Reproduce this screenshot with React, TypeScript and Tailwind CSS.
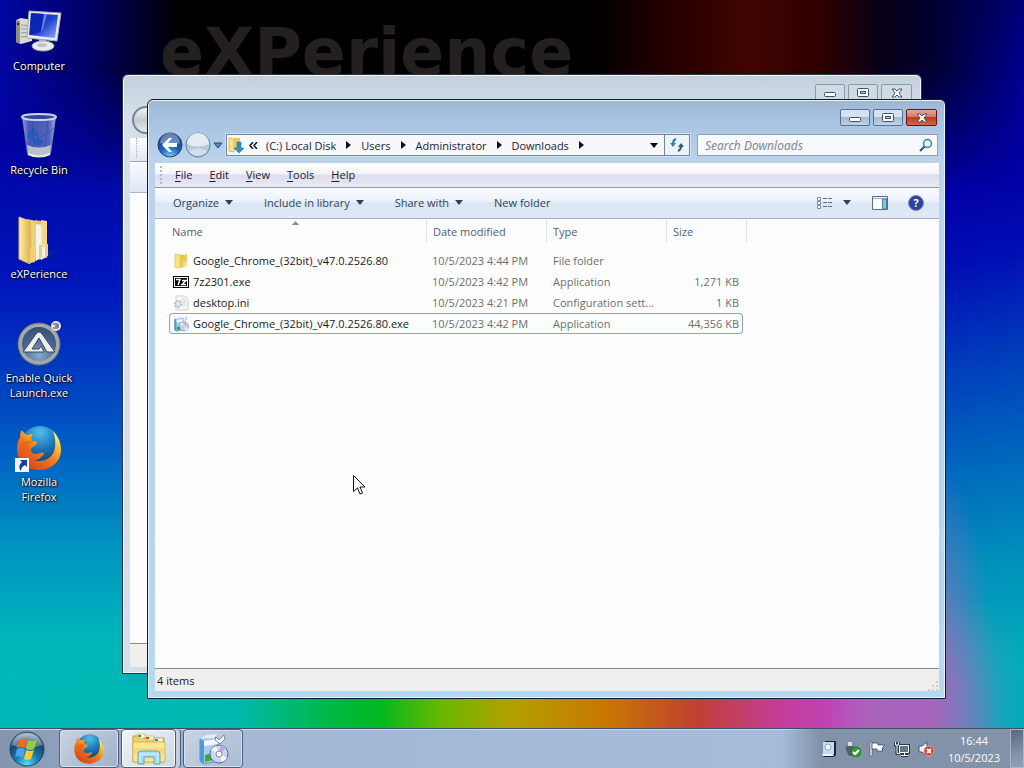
import React from 'react';

interface FileRow {
  name: string;
  modified: string;
  type: string;
  size: string;
  icon: React.ReactNode;
  selected?: boolean;
}

const Caret = () => (
  <svg width="8" height="5" viewBox="0 0 8 5" aria-hidden="true">
    <path d="M0 0h8L4 5z" fill="currentColor" />
  </svg>
);

const ComputerIcon = () => (
  <svg width="48" height="48" viewBox="0 0 48 48" aria-hidden="true">
    <defs>
      <linearGradient id="screen" x1="0" y1="0" x2="1" y2="1">
        <stop offset="0" stopColor="#1430c8" />
        <stop offset="0.5" stopColor="#1b3fd0" />
        <stop offset="1" stopColor="#8fb0f4" />
      </linearGradient>
    </defs>
    <path d="M1 12l5-2 11 2v21l-11 3-5-2z" fill="#d9d9d3" />
    <path d="M1 12l4 1v23l-4-2z" fill="#8f8f88" />
    <path d="M6 17l10 1M6 21l10 0M6 25l10-1M6 29l10-1" stroke="#9a9a92" />
    <rect x="2" y="15" width="2" height="2" fill="#222" />
    <path d="M24 31l7 1 1 7h-8z" fill="#b9bfc4" />
    <ellipse cx="28" cy="38" rx="11" ry="5" fill="#e8ebe6" stroke="#a8ada8" />
    <ellipse cx="27" cy="37" rx="5" ry="2" fill="#bcc3c5" />
    <path d="M14 3l32 2-4 28-30-3z" fill="#e8eaec" stroke="#a5abb2" />
    <path d="M16 5l27 2-3 23-26-3z" fill="url(#screen)" />
    <path d="M16 5l13 1-3 18-11 3z" fill="#0a1fae" opacity="0.8" />
    <path d="M29 6l3 0-4 15-2 3z" fill="#7f9cf0" opacity="0.7" />
  </svg>
);

const BinIcon = () => (
  <svg width="48" height="48" viewBox="0 0 48 48" aria-hidden="true">
    <defs>
      <linearGradient id="bin" x1="0" x2="1" y1="0" y2="0">
        <stop offset="0" stopColor="#9fb3e6" />
        <stop offset="0.2" stopColor="#4a61b8" />
        <stop offset="0.8" stopColor="#5a6fc0" />
        <stop offset="1" stopColor="#b5c2ea" />
      </linearGradient>
    </defs>
    <path d="M7 4h34l-5 38q-12 6-24 0z" fill="url(#bin)" opacity="0.9" />
    <path d="M12 33q12 5 24 0l-1 9q-11 5-22 0z" fill="#cdd1cb" opacity="0.85" />
    <path d="M13 42q11 5 22 0" fill="none" stroke="#e6ebee" strokeWidth="2" />
    <path d="M14 20l5-4 4 4 1 5-4-1-4 3-4-2zM18 27l6-2 4 5-5 4-5-3z" fill="#245bc0" />
    <path d="M26 25l13-9M17 8l2 26M33 8l-3 26" stroke="#2b3f9a" opacity="0.5" />
    <ellipse cx="24" cy="5" rx="17" ry="3" fill="#31479f" stroke="#cbd6ee" strokeWidth="2" />
  </svg>
);

const FolderIcon = () => (
  <svg width="48" height="48" viewBox="0 0 48 48" aria-hidden="true">
    <defs>
      <linearGradient id="fold" x1="0" x2="1">
        <stop offset="0" stopColor="#fff0a8" />
        <stop offset="1" stopColor="#dcb04a" />
      </linearGradient>
    </defs>
    <path d="M28 33l14 2-9 8z" fill="#152a70" opacity="0.5" />
    <path d="M20 4l12 2v36l-10-2z" fill="#e3bf62" />
    <path d="M21 8l6 1v35l-6-3z" fill="#f4f4ef" />
    <path d="M26 4l6 1v29l-5 10z" fill="#f3d985" />
    <path d="M12 3l9 2v40l-7-4z" fill="#efd078" />
    <path d="M4 1l11 4 1 30-1 13-11-5z" fill="url(#fold)" stroke="#d8b75e" />
    <path d="M15 32l5-2v16l-5 1zM24 29h3v12l-3 3zM30 28h3v12l-4 2z" fill="#f3cf6e" />
    <path d="M27 31l3-1v12l-3 1zM21 30l3-1v14l-3 2z" fill="#eef2f6" />
  </svg>
);

const AutoItIcon = () => (
  <svg width="48" height="48" viewBox="0 0 48 48" aria-hidden="true">
    <defs>
      <radialGradient id="auto" cx="0.5" cy="0.8" r="0.8">
        <stop offset="0" stopColor="#86a9cc" />
        <stop offset="0.6" stopColor="#46658c" />
        <stop offset="1" stopColor="#2f4a70" />
      </radialGradient>
    </defs>
    <circle cx="24" cy="24" r="19" fill="url(#auto)" stroke="#a5a7a8" strokeWidth="4" />
    <circle cx="24" cy="24" r="21" fill="none" stroke="#6e7072" />
    <path d="M8 32L21 14q3-4 6 0l13 18h-8L24 18l-7 11h7l2-3 3 6z" fill="#eceeee" stroke="#3a4755" />
    <circle cx="41" cy="6" r="5" fill="#e5e6e6" />
    <path d="M38 4h5v4h-5M40 6h3" fill="none" stroke="#4a4040" />
  </svg>
);

const FirefoxIcon = ({ size }: { size: number }) => (
  <svg width={size} height={size} viewBox="0 0 48 48" aria-hidden="true">
    <defs>
      <radialGradient id="globe" cx="0.5" cy="0.15" r="0.9">
        <stop offset="0" stopColor="#4fc0ea" />
        <stop offset="0.5" stopColor="#1a72b4" />
        <stop offset="1" stopColor="#122f66" />
      </radialGradient>
      <linearGradient id="fox" x1="0.9" y1="0.1" x2="0.3" y2="0.9">
        <stop offset="0" stopColor="#fff3a0" />
        <stop offset="0.25" stopColor="#f9c038" />
        <stop offset="0.6" stopColor="#ef7a1c" />
        <stop offset="1" stopColor="#dc4a1c" />
      </linearGradient>
    </defs>
    <circle cx="25" cy="22" r="20" fill="url(#globe)" />
    <path
      d="M38 7q8 8 8 19c0 12-10 20-22 20C11 46 2 37 2 25c0-5 1-9 3-11 0-3 0-5 2-8 2 3 3 4 5 5 3-1 5-1 6-1-2 3-2 4-1 7 3 0 5 0 5 2-1 3-5 4-6 6-1 4 3 5 6 5 4-1 7-2 7 0-3 4-6 6-10 6 8 3 20-1 21-13 1-8-1-13-2-16z"
      fill="url(#fox)"
    />
    <path d="M6 20c4-4 8-4 12-2-4 1-5 4-4 7 1 7 8 9 12 9-9 6-22 0-20-14z" fill="#e65c1a" opacity="0.6" />
  </svg>
);

const DownloadsIcon = () => (
  <svg width="18" height="18" viewBox="0 0 18 18" aria-hidden="true">
    <path d="M2 2l5 1v13l-5-1z" fill="#f8e48c" stroke="#e0b94c" />
    <path d="M7 2h6v12H7z" fill="#e9c75e" />
    <path d="M10 6h4v6h3l-5 5-5-5h3z" fill="#2f8ed0" stroke="#1a65a5" strokeWidth="0.5" />
  </svg>
);

const SmallFolderIcon = () => (
  <svg className="shrink-0" width="16" height="16" viewBox="0 0 16 16" aria-hidden="true">
    <path d="M2 1l5 1v13l-5-1z" fill="#f6e48a" stroke="#e3cb66" />
    <path d="M7 2l3-1v13l-3 1zM10 2l4-1v11l-4 2z" fill="#e6cb5c" />
    <path d="M10 9l4-1v5l-4 2z" fill="#f4df80" />
  </svg>
);

const SevenZipIcon = () => (
  <svg className="shrink-0" width="16" height="16" viewBox="0 0 16 16" aria-hidden="true">
    <rect y="2" width="16" height="12" fill="#000" />
    <rect x="1.500" y="3.500" width="13" height="9" fill="none" stroke="#fff" />
    <path d="M3 5.500h4L5 11M9 6.500h4l-4 4h4" fill="none" stroke="#fff" strokeWidth="1.500" />
  </svg>
);

const IniIcon = () => (
  <svg className="shrink-0" width="16" height="16" viewBox="0 0 16 16" aria-hidden="true">
    <path d="M3 1h9l3 3v11H3z" fill="#f6f8f8" stroke="#cdd3d5" />
    <path d="M8 4h4M9 6h4M9 8h4M9 10h4" stroke="#ccd4d8" />
    <circle cx="5" cy="9" r="3" fill="#e4e9ea" stroke="#b4bcc0" strokeWidth="2" strokeDasharray="2 1" />
  </svg>
);

const InstallerIcon = ({ size }: { size: number }) => (
  <svg className="shrink-0" width={size} height={size} viewBox="0 0 32 32" aria-hidden="true">
    <path d="M3 6l14-2 4 2v22l-14 3-4-3z" fill="#a9cdea" stroke="#5d93c0" />
    <path d="M3 6l4 2v23l-4-3z" fill="#4c9bd4" />
    <path d="M7 8l14-2v5L7 13z" fill="#f3f9fd" />
    <path d="M8 22l8-2v7l-8 2z" fill="#3cab2c" />
    <path d="M3 6l6-4 11-1-3 4z" fill="#e1eef8" />
    <circle cx="22" cy="21" r="9" fill="#cfd3ee" stroke="#5a689e" />
    <path d="M22 21l-8-4a9 9 0 0 1 5-4zM22 21l8 4a9 9 0 0 1-5 4z" fill="#f4f4ff" />
    <path d="M22 21l2-9a9 9 0 0 1 5 3z" fill="#b6a7e2" />
    <circle cx="22" cy="21" r="3" fill="#fff" stroke="#7d88bd" />
    <path d="M19 4l3 3 5-5 1 4-5 5-5-4z" fill="#eef4f8" stroke="#5a6a7c" strokeWidth="0.7" />
  </svg>
);

const ExplorerIcon = () => (
  <svg width="36" height="32" viewBox="0 0 36 32" aria-hidden="true">
    <path d="M2 3h10l2 3h5l2-1h12v24H2z" fill="#f1cf6c" stroke="#c79b3c" />
    <path d="M6 1h8v4H6zM15 3h8v4h-8zM23 5h9v4h-9z" fill="#fbf5dc" stroke="#c7a95a" strokeWidth="0.6" />
    <rect x="7" y="2" width="3" height="2" fill="#3aa546" />
    <rect x="15" y="4" width="3" height="2" fill="#d8442e" />
    <rect x="24" y="6" width="3" height="2" fill="#3a7fd0" />
    <path d="M2 9h32v20H2z" fill="#fae795" stroke="#d9b250" />
    <path d="M3 15h30v6H3z" fill="#f6d977" />
    <path d="M7 31V21q0-3 3-3h16q3 0 3 3v10h-6v-7H13v7z" fill="#a8dcee" stroke="#5ba4c4" />
    <path d="M9 29v-8h18v8" fill="none" stroke="#def4fb" />
  </svg>
);

const StartOrb = () => (
  <svg width="38" height="38" viewBox="0 0 38 38" aria-hidden="true">
    <defs>
      <radialGradient id="orb" cx="0.5" cy="0.95" r="0.9">
        <stop offset="0" stopColor="#4fe0f4" />
        <stop offset="0.4" stopColor="#1679ae" />
        <stop offset="0.75" stopColor="#1c466e" />
        <stop offset="1" stopColor="#8fa9c0" />
      </radialGradient>
    </defs>
    <circle cx="19" cy="19" r="17" fill="url(#orb)" stroke="#27405c" />
    <path d="M4 15a15.500 15.500 0 0 1 30 0q-15 6-30 0z" fill="#fff" opacity="0.3" />
    <path d="M11 10q4-3 8-1l-2 9q-4-2-8 0z" fill="#ef6a2a" />
    <path d="M20 10q4 2 9 0l-3 9q-4 2-8 0z" fill="#9ccb3c" />
    <path d="M9 19q4-2 8 0l-2 9q-4-3-8-1z" fill="#48a4e4" />
    <path d="M18 20q4 2 8 0l-3 9q-4 2-7 0z" fill="#fccb30" />
  </svg>
);

const MinGlyph = () => (
  <svg width="12" height="12" viewBox="0 0 12 12" aria-hidden="true">
    <rect x="0.500" y="5.500" width="11" height="4" rx="1" fill="#fff" stroke="#3f4f63" />
  </svg>
);

const MaxGlyph = () => (
  <svg width="12" height="12" viewBox="0 0 12 12" aria-hidden="true">
    <rect x="0.500" y="1.500" width="11" height="8" rx="1" fill="#fff" stroke="#3f4f63" />
    <rect x="3.500" y="4.500" width="5" height="2" fill="#b9cbdf" stroke="#3f4f63" />
  </svg>
);

const CloseGlyph = () => (
  <svg width="12" height="12" viewBox="0 0 12 12" aria-hidden="true">
    <path d="M1 2h3l2 2 2-2h3L8 6l3 4H8L6 8l-2 2H1l3-4z" fill="#fff" stroke="#44505f" />
  </svg>
);

const desktopItems = [
  { label: 'Computer', icon: <ComputerIcon /> },
  { label: 'Recycle Bin', icon: <BinIcon /> },
  { label: 'eXPerience', icon: <FolderIcon /> },
  { label: 'Enable Quick Launch.exe', icon: <AutoItIcon /> },
  {
    label: 'Mozilla Firefox',
    icon: (
      <>
        <FirefoxIcon size={48} />
        <svg className="absolute bottom-0 left-0" width="14" height="14" viewBox="0 0 14 14" aria-hidden="true">
          <rect width="14" height="14" fill="#f4f6fa" />
          <path d="M5 2h7v7l-2-2q-4 2-4 6-4-5 1-9z" fill="#1c3f8c" />
        </svg>
      </>
    ),
  },
];

const files: FileRow[] = [
  { name: 'Google_Chrome_(32bit)_v47.0.2526.80', modified: '10/5/2023 4:44 PM', type: 'File folder', size: '', icon: <SmallFolderIcon /> },
  { name: '7z2301.exe', modified: '10/5/2023 4:42 PM', type: 'Application', size: '1,271 KB', icon: <SevenZipIcon /> },
  { name: 'desktop.ini', modified: '10/5/2023 4:21 PM', type: 'Configuration sett...', size: '1 KB', icon: <IniIcon /> },
  { name: 'Google_Chrome_(32bit)_v47.0.2526.80.exe', modified: '10/5/2023 4:42 PM', type: 'Application', size: '44,356 KB', icon: <InstallerIcon size={16} />, selected: true },
];

const crumbs = ['(C:) Local Disk', 'Users', 'Administrator', 'Downloads'];
const menus = ['File', 'Edit', 'View', 'Tools', 'Help'];

const Wallpaper = () => (
  <div className="absolute inset-0 overflow-hidden bg-[linear-gradient(168deg,#000044_0%,#000060_16%,#000090_30%,#0000a8_42%,#0010b4_50%,#0040bc_61%,#0064bc_70%,#0090bc_82%,#00b4b8_96%)]">
    <div className="absolute inset-y-0 left-0 w-32 bg-[linear-gradient(to_bottom,#0008a0_0%,#0004a4_20%,#0018bc_40%,#0058c4_60%,#0094c0_75%,#00b4bc_88%)]" />
    <div className="absolute inset-x-0 top-0 h-48 bg-[linear-gradient(to_right,transparent_0%,#00006c_8%,#000028_14%,#000_18%,#000_58%,#200000_64%,#400400_73%,#300000_80%,#080018_86%,#000030_91%,transparent_100%)] [mask-image:linear-gradient(to_bottom,#000_35%,transparent)]" />
    <div className="absolute inset-x-0 bottom-0 h-32 bg-[linear-gradient(to_right,#00b8b8_0%,#00b8b0_23%,#00b848_32%,#00b820_37%,#68b800_43%,#b4a000_50%,#c87800_59%,#c04030_68%,#c43c98_76%,#c044b8_82%,#b070bc_88%,#5090bc_93%,#00acb8_100%)] [mask-image:linear-gradient(to_bottom,transparent,#000_70%)]" />
    <div className="absolute right-0 bottom-0 h-80 w-48 bg-[radial-gradient(ellipse_90px_300px_at_40%_100%,#a864bc_20%,transparent)]" />
    <p className="absolute top-5 left-[160px] font-['DejaVu_Sans'] text-[65px] leading-none font-bold text-[#252020]">eXPerience</p>
  </div>
);

const CaptionButtons = ({ active }: { active?: boolean }) => {
  const idle = active
    ? 'border-[#56708f] bg-[linear-gradient(#d5e2f0_45%,#a3bad3_50%,#bdd3ea)]'
    : 'border-[#8b98a8] bg-[#cfdae6]';
  return (
    <div className="flex gap-[3px]">
      <button aria-label="Minimize" className={`flex h-[17px] w-[30px] items-center justify-center rounded-xs border ${idle}`}>
        <MinGlyph />
      </button>
      <button aria-label="Maximize" className={`flex h-[17px] w-[30px] items-center justify-center rounded-xs border ${idle}`}>
        <MaxGlyph />
      </button>
      <button
        aria-label="Close"
        className={`flex h-[17px] w-[31px] items-center justify-center rounded-xs border ${
          active ? 'border-[#5c1710] bg-[linear-gradient(#e8a797_0%,#d7796a_45%,#be3a22_50%,#d8664a)]' : idle
        }`}
      >
        <CloseGlyph />
      </button>
    </div>
  );
};

const BackWindow = () => (
  <section aria-label="Background window" className="absolute top-[74px] right-[102px] bottom-[54px] left-[122px] flex flex-col rounded-t-md border border-[#2c3340] bg-[linear-gradient(#c3cfdb,#d3dfea_40px)] pr-1.5 pb-1.5 pl-[7px] shadow-[inset_0_0_0_1px_#f2f6fa]">
    <div className="flex h-[31px] justify-end pt-[9px] pr-[3px]">
      <CaptionButtons />
    </div>
    <div className="flex h-8 items-start pl-0.5">
      <div className="size-7 rounded-full border-2 border-[#7d858e] bg-[linear-gradient(#eef2f5,#c3cdd6_50%,#e2e9ee)]" />
    </div>
    <div className="h-6 border-b border-[#9aa6b4] bg-[linear-gradient(#fff,#e2e4f0)]">
      <div className="ml-1.5 h-5 w-px border-l border-dotted border-[#9fa8b4]" />
    </div>
    <div className="h-[31px] border-b border-[#a9b8ca] bg-[linear-gradient(#f8fbff,#dde7f3)]" />
    <div className="flex-1 bg-[#fdfdfd]" />
    <div className="h-6 border-t border-[#8b8b8b] bg-[#f1eeee]" />
  </section>
);

const AddressRow = () => (
  <div className="flex h-8 items-start pr-px">
    <div className="flex items-center pl-px">
      <button aria-label="Back">
        <svg width="28" height="28" viewBox="0 0 28 28" aria-hidden="true">
          <defs>
            <radialGradient id="back" cx="0.5" cy="1" r="0.9">
              <stop offset="0" stopColor="#6fd0f8" />
              <stop offset="0.5" stopColor="#1c62b8" />
              <stop offset="1" stopColor="#16408c" />
            </radialGradient>
          </defs>
          <circle cx="14" cy="14" r="12" fill="url(#back)" stroke="#2a4468" />
          <path d="M4 12a10 10 0 0 1 20 0q-10 4-20 0z" fill="#fff" opacity="0.35" />
          <path d="M6 14l7-7h3l-4 5h9v4h-9l4 5h-3z" fill="#fff" />
        </svg>
      </button>
      <button aria-label="Forward">
        <svg width="28" height="28" viewBox="0 0 28 28" aria-hidden="true">
          <circle cx="14" cy="14" r="12" fill="#b7c9dd" stroke="#6b7f96" />
          <path d="M3 13a11 11 0 0 1 22 0q-11 5-22 0z" fill="#e3ebf3" />
          <path d="M5 20a11 11 0 0 0 18 0q-9-5-18 0z" fill="#d2e0ee" />
        </svg>
      </button>
      <button aria-label="Recent pages" className="px-px text-[#1e4c80]">
        <svg width="10" height="7" viewBox="0 0 10 7" aria-hidden="true">
          <path d="M1 1h8L5 6z" fill="#5688b8" stroke="#1e4c80" />
        </svg>
      </button>
    </div>
    <div className="mt-[3px] ml-0.5 flex h-[22px] flex-1 border border-[#6f87a3] bg-[#f6f8fc] shadow-[0_0_0_1px_#cfe0f2]">
      <nav aria-label="Address" className="flex flex-1 items-center text-[#1d1d2b]">
        <DownloadsIcon />
        <svg className="mr-2 ml-1" width="9" height="7" viewBox="0 0 9 7" aria-hidden="true">
          <path d="M4 0L1 3.500 4 7M8 0L5 3.500 8 7" fill="none" stroke="#111" strokeWidth="1.500" />
        </svg>
        {crumbs.map((crumb) => (
          <React.Fragment key={crumb}>
            <button>{crumb}</button>
            <svg className="mx-2.5" width="5" height="8" viewBox="0 0 5 8" aria-hidden="true">
              <path d="M0 0v8l5-4z" fill="#111" />
            </svg>
          </React.Fragment>
        ))}
      </nav>
      <button aria-label="Previous locations" className="w-5 pl-1.5 text-black">
        <Caret />
      </button>
      <button aria-label="Refresh" className="flex w-[25px] items-center justify-center border-l border-[#6f87a3] bg-[#eef3f9]">
        <svg width="14" height="14" viewBox="0 0 14 14" aria-hidden="true">
          <path d="M6 1Q3 2 3 6" fill="none" stroke="#2c7fb0" strokeWidth="2" />
          <path d="M0 5h6L3 9z" fill="#2c7fb0" />
          <path d="M8 13q3-1 3-5" fill="none" stroke="#1e5d8c" strokeWidth="2" />
          <path d="M8 9h6l-3-4z" fill="#1e5d8c" />
        </svg>
      </button>
    </div>
    <div className="mt-[3px] ml-[7px] flex h-[22px] w-[241px] items-center border border-[#8aa0bb] bg-[#f6f9fd] pr-1 pl-[7px]">
      <input
        type="search"
        aria-label="Search Downloads"
        placeholder="Search Downloads"
        className="min-w-0 flex-1 bg-transparent font-['Noto_Sans',sans-serif] text-[12px] italic outline-none placeholder:text-[#83868e] placeholder:italic"
      />
      <svg width="14" height="14" viewBox="0 0 14 14" aria-hidden="true">
        <circle cx="8.500" cy="5.500" r="4" fill="#e4f2fa" stroke="#3a83a8" strokeWidth="1.500" />
        <path d="M5.500 8.500L1 13" stroke="#3b4d70" strokeWidth="2" />
      </svg>
    </div>
  </div>
);

const Toolbar = () => (
  <div className="flex h-[31px] items-center border-b border-[#9fb1c8] bg-[linear-gradient(#fafcff_0%,#eaf1fa_45%,#dce6f3_50%,#e0e9f5)] pr-[15px] pb-px pl-[18px] text-[#2c4260]">
    <div className="flex gap-[31px]">
      <button className="flex items-center gap-1.5">Organize <Caret /></button>
      <button className="flex items-center gap-1.5">Include in library <Caret /></button>
      <button className="flex items-center gap-1.5">Share with <Caret /></button>
      <button>New folder</button>
    </div>
    <button aria-label="Change your view" className="ml-auto flex items-center gap-2.5">
      <svg width="16" height="12" viewBox="0 0 16 12" aria-hidden="true">
        <path d="M.5.5h3v3h-3zM.5 4.500h3v3h-3zM.5 8.500h3v3h-3z" fill="#fff" stroke="#7d8ba0" />
        <path d="M6 1.500h4m1 0h4M6 5.500h4m1 0h4M6 9.500h4m1 0h4" stroke="#5c6c84" />
      </svg>
      <Caret />
    </button>
    <button aria-label="Show the preview pane" className="ml-[21px]">
      <svg width="16" height="14" viewBox="0 0 16 14" aria-hidden="true">
        <path d="M.5.5h15v13H.5z" fill="#fff" stroke="#4b6f92" />
        <path d="M1 2.500h14" stroke="#9db8d0" />
        <path d="M10.500 3h4v10h-4z" fill="#8cc4d0" stroke="#4b8298" />
      </svg>
    </button>
    <button aria-label="Get help" className="ml-5 flex size-4 items-center justify-center rounded-full border border-[#7b8bb4] bg-[#2c459a] font-bold text-white">
      ?
    </button>
  </div>
);

const FileTable = () => (
  <table className="ml-3.5 w-[574px] table-fixed border-separate border-spacing-0 text-left text-[#6d6d6d]">
    <colgroup>
      <col className="w-[257px]" />
      <col className="w-[120px]" />
      <col className="w-[120px]" />
      <col />
    </colgroup>
    <thead>
      <tr className="h-6 text-[#4c607a]">
        <th className="relative pl-[3px] font-normal">
          Name
          <svg className="absolute top-0.5 left-[123px]" width="7" height="4" viewBox="0 0 7 4" aria-hidden="true">
            <path d="M0 4l3.500-4L7 4z" fill="#7391ad" />
          </svg>
        </th>
        <th className="border-l border-[#e1e5ec] pl-1.5 font-normal">Date modified</th>
        <th className="border-l border-[#e1e5ec] pl-1.5 font-normal">Type</th>
        <th className="relative border-l border-[#e1e5ec] pl-1.5 font-normal">
          Size
          <span className="absolute inset-y-0 -right-1 w-px bg-[#e1e5ec]" />
        </th>
      </tr>
      <tr className="h-[7px]" />
    </thead>
    <tbody>
      {files.map((file) => {
        const edge = file.selected ? 'border-[#8aa4bf]' : 'border-transparent';
        return (
          <tr key={file.name} className="h-[21px]">
            <td className={`rounded-l-sm border-y border-l pl-[3px] text-[#1a1a1a] ${edge}`}>
              <span className="flex items-center gap-1">
                {file.icon}
                {file.name}
              </span>
            </td>
            <td className={`border-y pl-1.5 ${edge}`}>{file.modified}</td>
            <td className={`border-y pl-[7px] whitespace-nowrap ${edge}`}>{file.type}</td>
            <td className={`rounded-r-sm border-y border-r pr-[3px] text-right whitespace-nowrap ${edge}`}>{file.size}</td>
          </tr>
        );
      })}
    </tbody>
  </table>
);

const ExplorerWindow = () => (
  <section aria-label="Downloads" className="absolute top-[99px] right-[78px] bottom-[29px] left-[147px] flex flex-col rounded-t-md border border-[#0c1c38] bg-[linear-gradient(#9db7d3_0%,#a9c4e2_4%,#bcd2ec_10%,#b9d4ee_20%,#b5d9ee_100%)] pr-1.5 pb-[7px] pl-[7px] shadow-[inset_0_0_0_1px_#e6f1fb]">
    <div className="flex h-[31px] justify-end pt-[9px] pr-0.5">
      <CaptionButtons active />
    </div>
    <AddressRow />
    <div className="flex h-[25px] items-center gap-[17px] border-b border-[#8d99ad] bg-[linear-gradient(#fff_0%,#f4f4fb_45%,#dcdcec_50%,#e9e9f3)] pb-px pl-[5px] text-[#22182e]">
      <div className="-mr-1 h-[18px] border-l-2 border-dotted border-[#b3b9c8]" />
      {menus.map((menu) => (
        <button key={menu}>
          <span className="underline underline-offset-2">{menu[0]}</span>
          {menu.slice(1)}
        </button>
      ))}
    </div>
    <Toolbar />
    <div className="flex-1 bg-[#fdfdfd]">
      <FileTable />
    </div>
    <footer className="flex h-[23px] items-center justify-between border-t border-[#84888f] bg-[#f1eeee] pl-0.5 text-[#1a1a1a]">
      4 items
      <svg className="self-end" width="11" height="11" viewBox="0 0 11 11" aria-hidden="true">
        <path d="M8 1h2v2H8zM8 5h2v2H8zM8 9h2v2H8zM4 5h2v2H4zM4 9h2v2H4zM0 9h2v2H0z" fill="#cfcbcb" />
      </svg>
    </footer>
  </section>
);

const Tray = () => (
  <div className="ml-auto flex h-full items-center bg-[linear-gradient(to_right,transparent,#8192a9_40px)] pl-10">
    <div className="flex items-center gap-2">
      <button aria-label="Installer">
        <svg width="16" height="16" viewBox="0 0 16 16" aria-hidden="true">
          <path d="M4 0h11v14l-2 2H2l2-2z" fill="#18243c" />
          <path d="M2 1h11v12H2z" fill="#c4dcf0" />
          <circle cx="7" cy="6" r="3" fill="#f6f9ff" stroke="#8ea6cc" />
          <path d="M1 13h11l1 2H2z" fill="#eef4fa" />
        </svg>
      </button>
      <button aria-label="Safely remove hardware">
        <svg width="16" height="16" viewBox="0 0 16 16" aria-hidden="true">
          <path d="M3 1h4v4H3z" fill="#d9dcde" />
          <path d="M1 5h8v4l-2 6H4L1 9z" fill="#565d66" />
          <circle cx="11" cy="11" r="5" fill="#2fa032" stroke="#1d7422" />
          <path d="M8 11l2 2 4-4" fill="none" stroke="#fff" strokeWidth="2" />
        </svg>
      </button>
      <button aria-label="Action Center">
        <svg width="17" height="16" viewBox="0 0 17 16" aria-hidden="true">
          <path d="M1 1h2v14H1z" fill="#fff" stroke="#3c4a5c" strokeWidth="0.6" />
          <path d="M3 2h6v2h7l-3 3 1 3H8V8H3z" fill="#fff" stroke="#3c4a5c" strokeWidth="0.8" />
        </svg>
      </button>
      <button aria-label="Network">
        <svg width="16" height="16" viewBox="0 0 16 16" aria-hidden="true">
          <path d="M5.500 4.500h9v7h-9zM7 14.500h7M10.500 12v2M1.500 1v3h3V1M3 4v8.500h3" fill="none" stroke="#28344a" strokeWidth="3" />
          <path d="M5.500 4.500h9v7h-9z" fill="#64768e" stroke="#fff" />
          <path d="M7 14.500h7M10.500 12v2M1.500 1v3h3V1M3 4v8.500h3" fill="none" stroke="#fff" />
        </svg>
      </button>
      <button aria-label="Volume muted">
        <svg width="17" height="16" viewBox="0 0 17 16" aria-hidden="true">
          <path d="M1 5h3l5-4v14l-5-4H1z" fill="#eef2f6" stroke="#46566c" />
          <circle cx="11" cy="10" r="5" fill="#d43a34" stroke="#f0a09a" />
          <path d="M9 8l4 4M13 8l-4 4" stroke="#fff" strokeWidth="2" />
        </svg>
      </button>
    </div>
    <button className="ml-[9px] w-[60px] text-center leading-[17px] text-white">
      16:44
      <br />
      10/5/2023
    </button>
    <button aria-label="Show desktop" className="ml-1.5 h-full w-3.5 border border-[#a9b6c6] bg-[linear-gradient(160deg,#56667c,#8090a6_60%,#92a2b6)]" />
  </div>
);

const App: React.FC = () => (
  <div className="flex h-screen flex-col overflow-hidden font-['Open_Sans',sans-serif] text-[11px] leading-[15px]">
    <main className="relative flex-1">
      <Wallpaper />
      <div className="relative flex w-[78px] flex-col pt-2">
        {desktopItems.map((item) => (
          <button key={item.label} className="flex h-[104px] flex-col items-center text-center text-white [text-shadow:1px_1px_2px_#000,0_0_2px_#000]">
            <span className="relative mb-0.5">{item.icon}</span>
            <span className="w-[74px]">{item.label}</span>
          </button>
        ))}
      </div>
      <BackWindow />
      <ExplorerWindow />
      <svg className="absolute top-[475px] left-[353px]" width="13" height="20" viewBox="0 0 13 20" aria-hidden="true">
        <path d="M.5.5v16l4-3.500 2.500 6 2.500-1L7 12h5z" fill="#fff" stroke="#111" />
      </svg>
    </main>

    <footer className="flex h-10 items-center border-t border-[#3a4f68] bg-[linear-gradient(to_right,#8494ad_0,#8d9fba_50px,#a4b8d6_240px,#a5bedd_100%)] shadow-[inset_0_1px_0_#c9d8ea]">
      <button aria-label="Start" className="ml-2">
        <StartOrb />
      </button>
      <div className="ml-[13px] flex h-full gap-0.5">
        <button aria-label="Mozilla Firefox" className="flex w-[60px] items-center justify-center rounded-sm border border-[#4a5c76] bg-[linear-gradient(135deg,#c9d4e2,#a0b0c8)] shadow-[inset_0_0_0_1px_#d8e1ec]">
          <FirefoxIcon size={32} />
        </button>
        <div className="flex">
          <button aria-label="Windows Explorer" className="flex w-[55px] items-center justify-center rounded-sm border border-[#4a5c76] bg-[linear-gradient(135deg,#f0f4f8,#ccd8e4)] shadow-[inset_0_0_0_1px_#fff]">
            <ExplorerIcon />
          </button>
          <div className="w-[5px] rounded-r-sm border-r border-[#4a5c76] bg-[#c3cfde]" />
        </div>
        <button aria-label="Google Chrome installer" className="flex w-[60px] items-center justify-center rounded-sm border border-[#4a5c76] bg-[linear-gradient(135deg,#c9d4e2,#a9bad2)] shadow-[inset_0_0_0_1px_#d8e1ec]">
          <InstallerIcon size={32} />
        </button>
      </div>
      <Tray />
    </footer>
  </div>
);

export default App;
